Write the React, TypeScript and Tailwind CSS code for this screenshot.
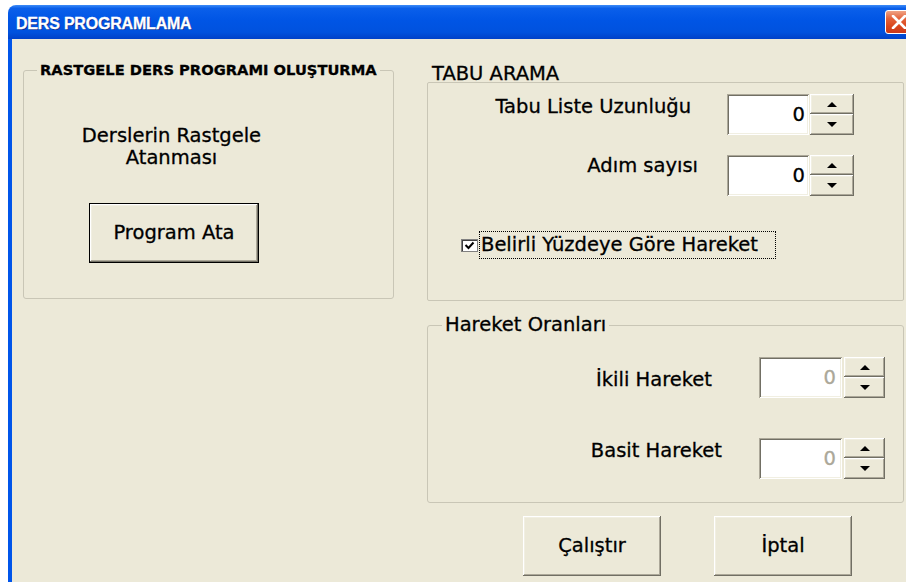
import React from 'react';

// classic 3D raised face and sunken field edges
const raised =
  'bg-[#ECE9D8] shadow-[inset_-1px_-1px_0_#716F64,inset_1px_1px_0_#FFFFFF,inset_-2px_-2px_0_#ACA899,inset_2px_2px_0_#F1EFE2]';
const sunken =
  'bg-white shadow-[inset_1px_1px_0_#ACA899,inset_-1px_-1px_0_#FFFFFF,inset_2px_2px_0_#716F64,inset_-2px_-2px_0_#F1EFE2]';

function Arrow({ up }: { up?: boolean }) {
  return (
    <svg width="10" height="5" viewBox="0 0 10 5">
      <polygon points={up ? '5,0 10,5 0,5' : '0,0 10,0 5,5'} fill="#000" />
    </svg>
  );
}

function Spinner({
  value,
  disabled = false,
  inputClass,
  spinClass,
}: {
  value: string;
  disabled?: boolean;
  inputClass: string;
  spinClass: string;
}) {
  return (
    <div className="flex h-[41px]">
      <div
        className={`${sunken} ${inputClass} flex h-full items-center justify-end text-[19.5px] leading-[20px] ${
          disabled ? 'pr-[6px] text-[#ACA899]' : 'pr-[4px] text-black'
        }`}
      >
        {value}
      </div>
      <div className={`${spinClass} flex h-full flex-col`}>
        <div className={`${raised} flex h-[20px] items-center justify-center`}>
          <Arrow up />
        </div>
        <div className={`${raised} flex flex-1 items-center justify-center`}>
          <Arrow />
        </div>
      </div>
    </div>
  );
}

export default function App() {
  return (
    <div className="h-[582px] w-[906px] overflow-hidden bg-white pl-[8px] pt-[5px] font-['DejaVu_Sans',sans-serif] text-black [-webkit-text-stroke:0.3px_currentColor]">
      <div className="w-[910px]">
        {/* title bar */}
        <div className="flex h-[34px] items-start justify-between rounded-t-[8px] bg-[linear-gradient(180deg,#3D8BF7_0%,#0A5FEA_10%,#0055E5_45%,#0052DE_80%,#0041C8_100%)] pl-[8px] pr-[5px]">
          <div className="pt-[10px] font-['Liberation_Sans',Arial,sans-serif] text-[16px] font-bold leading-[18px] tracking-[-0.2px] text-white [text-shadow:1px_1px_0_#0B2A8C]">
            DERS PROGRAMLAMA
          </div>
          <div className="mt-[5px] flex h-[24px] w-[28px] items-center justify-center rounded-[3px] border border-white bg-[linear-gradient(180deg,#F0A486_0%,#E3623A_35%,#D9461C_70%,#C9381A_100%)]">
            <svg width="16" height="14" viewBox="0 0 16 14">
              <path d="M2 1 L14 13 M14 1 L2 13" stroke="#fff" strokeWidth="2.6" strokeLinecap="round" />
            </svg>
          </div>
        </div>

        {/* dialog body */}
        <div className="flex h-[543px] items-start border-l-[4px] border-[#0055EA] bg-[#ECE9D8]">
          {/* left column */}
          <div className="ml-[11px] w-[371px]">
            <fieldset className="mt-[23px] h-[237px] rounded-[3px] border border-[#C9C6B6]">
              <legend className="ml-[13px] px-[3px] text-[14.7px] font-bold leading-[16px]">
                RASTGELE DERS PROGRAMI OLUŞTURMA
              </legend>
              <div className="mt-[47px] w-[295px] text-center text-[19.5px] leading-[22px]">
                Derslerin Rastgele
                <br />
                Atanması
              </div>
              <button
                className={`ml-[65px] mt-[34px] flex h-[60px] w-[170px] items-center justify-center border border-black text-[19.5px] leading-[20px] ${raised}`}
              >
                Program Ata
              </button>
            </fieldset>
          </div>

          {/* right column */}
          <div className="ml-[33px] w-[477px]">
            <div className="mt-[27px] pl-[5px] text-[19.5px] leading-[16px]">TABU ARAMA</div>
            <div className="h-[219px] rounded-[2px] border border-[#C9C6B6] pt-[11px]">
              <div className="flex items-start">
                <div className="w-[299px] pr-[36px] pt-[5px] text-right text-[19.5px] leading-[16px]">
                  Tabu Liste Uzunluğu
                </div>
                <Spinner value="0" inputClass="w-[82px]" spinClass="ml-[1px] w-[44px]" />
              </div>
              <div className="mt-[20px] flex items-start">
                <div className="w-[299px] pr-[29px] pt-[3px] text-right text-[19.5px] leading-[16px]">
                  Adım sayısı
                </div>
                <Spinner value="0" inputClass="w-[82px]" spinClass="ml-[1px] w-[44px]" />
              </div>
              <div className="ml-[33px] mt-[35px] flex items-center">
                <div className="flex h-[13px] w-[17px] items-center justify-center border border-[#808080] bg-white shadow-[inset_1px_1px_0_#404040]">
                  <svg width="11" height="9" viewBox="0 0 11 9">
                    <path d="M1.5 4 L4.5 7 L9.5 1.5" stroke="#000" strokeWidth="2" fill="none" />
                  </svg>
                </div>
                <div className="ml-[1px] flex h-[28px] w-[297px] items-center border border-dotted border-black pl-[1px] text-[19.5px] leading-[16px]">
                  Belirli Yüzdeye Göre Hareket
                </div>
              </div>
            </div>

            <fieldset className="mt-[16px] h-[186px] rounded-[3px] border border-[#C9C6B6]">
              <legend className="ml-[14px] px-[3px] text-[19.5px] leading-[16px]">Hareket Oranları</legend>
              <div className="mt-[24px] flex items-start">
                <div className="w-[331px] pr-[47px] pt-[15px] text-right text-[19.5px] leading-[16px]">
                  İkili Hareket
                </div>
                <Spinner value="0" disabled inputClass="w-[83px]" spinClass="ml-[2px] w-[41px]" />
              </div>
              <div className="mt-[40px] flex items-start">
                <div className="w-[331px] pr-[37px] pt-[5px] text-right text-[19.5px] leading-[16px]">
                  Basit Hareket
                </div>
                <Spinner value="0" disabled inputClass="w-[83px]" spinClass="ml-[2px] w-[41px]" />
              </div>
            </fieldset>

            <div className="ml-[96px] mt-[13px] flex gap-[53px]">
              <button className={`flex h-[60px] w-[138px] items-center justify-center text-[19.5px] leading-[20px] ${raised}`}>
                Çalıştır
              </button>
              <button className={`flex h-[60px] w-[138px] items-center justify-center text-[19.5px] leading-[20px] ${raised}`}>
                İptal
              </button>
            </div>
          </div>
        </div>
      </div>
    </div>
  );
}
